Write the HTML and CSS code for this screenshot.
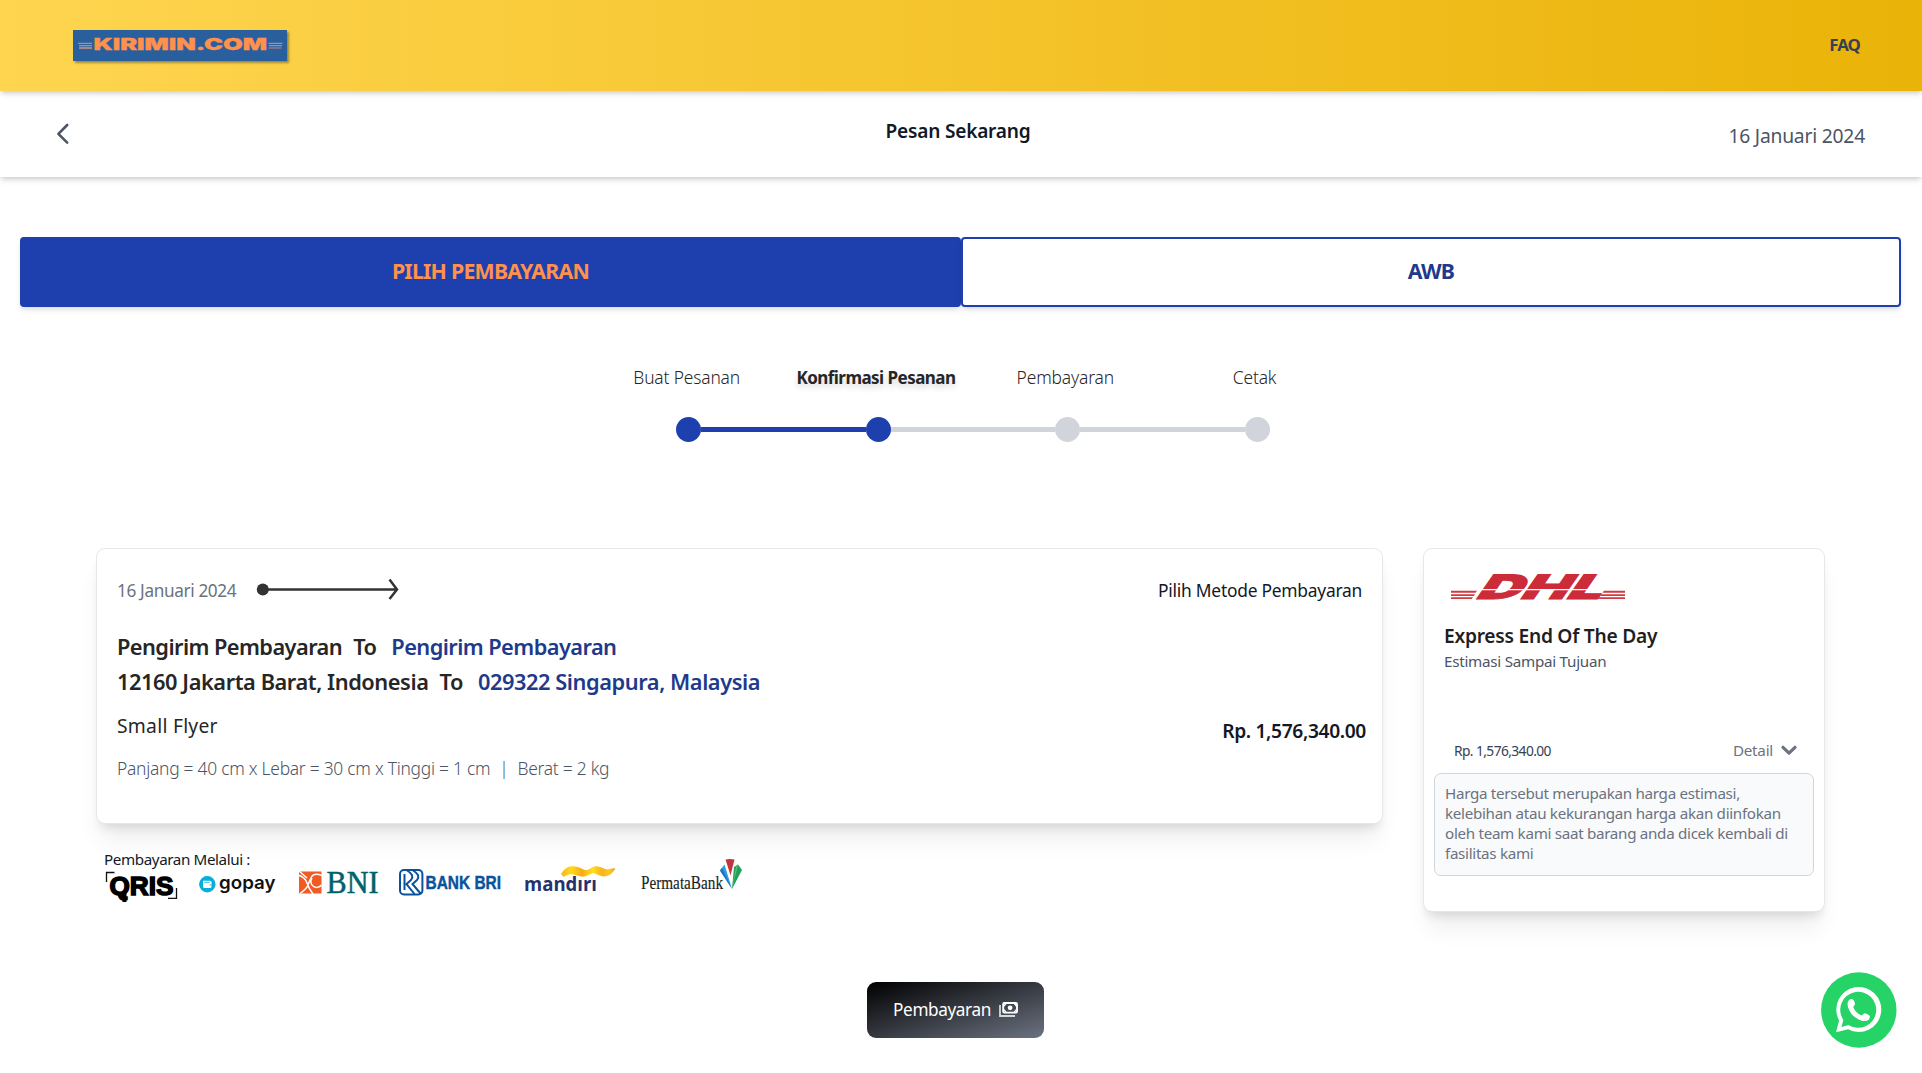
FILE: index.html
```html
<!DOCTYPE html>
<html lang="id">
<head>
<meta charset="utf-8">
<title>Kirimin.com - Konfirmasi Pesanan</title>
<link rel="stylesheet" href="styles.css">
</head>
<body>
<header class="topbar">
  <svg class="brand" viewBox="0 0 214 31" width="214" height="31" role="img" aria-label="Kirimin.com">
    <rect width="214" height="31" fill="#2a5f9e"/>
    <path d="M5 13.300h14M6 15.700h13M195.500 13.300h14M196 15.700h13M195.500 18h13" stroke="#b98a80" stroke-width="1.200"/>
    <path d="M6 18h13" stroke="#a98485" stroke-width="2.200"/>
    <text x="20.500" y="20.200" class="brand-text" textLength="173.500" lengthAdjust="spacingAndGlyphs">KIRIMIN.COM</text>
  </svg>
  <a class="faq">FAQ</a>
</header>
<nav class="subbar">
  <svg class="back" viewBox="0 0 24 24" width="24" height="24" fill="none" stroke="#4b5563" stroke-width="2.600" stroke-linecap="round" stroke-linejoin="round"><path d="M15.200 3L6.400 11.800L15.200 20.600"/></svg>
  <h1 class="page-title">Pesan Sekarang</h1>
  <span class="today">16 Januari 2024</span>
</nav>
<main class="main">
  <div class="tabs">
    <button class="tab tab-active">PILIH PEMBAYARAN</button>
    <button class="tab">AWB</button>
  </div>
  <div class="steps">
    <div class="step-labels">
      <span>Buat Pesanan</span>
      <span class="step-current">Konfirmasi Pesanan</span>
      <span>Pembayaran</span>
      <span>Cetak</span>
    </div>
    <div class="track">
      <i class="dot done"></i><i class="line done"></i><i class="dot done"></i><i class="line"></i><i class="dot"></i><i class="line"></i><i class="dot"></i>
    </div>
  </div>
  <div class="content">
    <section class="left">
      <article class="card order">
        <div class="order-head">
          <span class="order-date">16 Januari 2024</span>
          <svg class="arrow" viewBox="0 0 142 24" width="142" height="24" fill="none" stroke="#333" stroke-width="2.500"><circle cx="5.800" cy="11.500" r="6" fill="#333" stroke="none"/><path d="M8 11.500h131M132.500 1.500l7.500 10l-7.500 9.500"/></svg>
          <span class="order-method">Pilih Metode Pembayaran</span>
        </div>
        <div class="route"><span>Pengirim Pembayaran</span><span class="to">To</span><span class="dest">Pengirim Pembayaran</span></div>
        <div class="route route-city"><span>12160 Jakarta Barat, Indonesia</span><span class="to">To</span><span class="dest">029322 Singapura, Malaysia</span></div>
        <div class="order-foot">
          <div>
            <p class="package">Small Flyer</p>
            <p class="dims"><span>Panjang = 40 cm x Lebar = 30 cm x Tinggi = 1 cm</span><span class="bar">|</span><span>Berat = 2 kg</span></p>
          </div>
          <strong class="total">Rp. 1,576,340.00</strong>
        </div>
      </article>
      <p class="via">Pembayaran Melalui :</p>
      <div class="logos">
        <svg viewBox="104 858 77 46" width="77" height="46" role="img" aria-label="QRIS">
          <path d="M106.500 882V872.500h8M168 898.300h8.500V888" fill="none" stroke="#111" stroke-width="1.300"/>
          <text x="109.500" y="894.500" class="lg-qris" textLength="64" lengthAdjust="spacingAndGlyphs">QRIS</text>
          <path d="M122.500 893h4v9h-4z" fill="#000"/>
        </svg>
        <svg viewBox="197 858 81 46" width="81" height="46" role="img" aria-label="gopay">
          <circle cx="207.300" cy="884.300" r="8.200" fill="#08aed6"/>
          <path d="M203 880.800h7a1.500 1.500 0 0 1 1.500 1.500v4.200a1.500 1.500 0 0 1-1.500 1.500h-5.500a1.500 1.500 0 0 1-1.500-1.500z" fill="#fff"/>
          <path d="M204 882.300h5.500M209.500 885h2" stroke="#08aed6" stroke-width=".8"/>
          <text x="219" y="888.500" class="lg-gopay" textLength="56.500" lengthAdjust="spacingAndGlyphs">gopay</text>
        </svg>
        <svg viewBox="294 858 87 46" width="87" height="46" role="img" aria-label="BNI">
          <path d="M299 871.500h22.500v22H299z" fill="#f15a23"/>
          <path d="M298 875q7 2 9 8t6 11M322 875.500q-8-3-10.500 1.500t-3.500 8-8 8.500M312 878a5.500 5.500 0 0 0 9.500 7M299 871l8 7" fill="none" stroke="#fff" stroke-width="1.500"/>
          <text x="326.500" y="893" class="lg-bni" textLength="52" lengthAdjust="spacingAndGlyphs">BNI</text>
        </svg>
        <svg viewBox="397 858 106 46" width="106" height="46" role="img" aria-label="BANK BRI">
          <rect x="400" y="870" width="22.400" height="24.500" rx="4" fill="#fff" stroke="#0b529c" stroke-width="2"/>
          <path d="M404.500 874v16M407 870.500q8 4.500 4 9.500L406.500 884l8 10M413 870.500q8 4.500 4 9.500L412.500 884l8 9.500" fill="none" stroke="#0b529c" stroke-width="2"/>
          <text x="425.500" y="888.600" class="lg-bri" textLength="75.500" lengthAdjust="spacingAndGlyphs">BANK BRI</text>
        </svg>
        <svg viewBox="519 858 100 46" width="100" height="46" role="img" aria-label="mandiri">
          <defs><linearGradient id="gold" x1="0" x2="1"><stop offset="0" stop-color="#f9b51a"/><stop offset=".2" stop-color="#ffd91a"/><stop offset=".38" stop-color="#f8ab18"/><stop offset=".58" stop-color="#ffe11a"/><stop offset=".75" stop-color="#f9b31c"/><stop offset=".9" stop-color="#fcc81c"/><stop offset="1" stop-color="#ee9b2a"/></linearGradient></defs>
          <path d="M561 874C565 868 569 865.500 575 866.500C581 867 583 870.500 587 870C591 869 593 865.500 598 866.500C603 867.500 605 870 609 869.300Q613 867.500 615.500 868.500C613 872.500 609 877 603 876.500C597 875.500 595 872.500 592 873.500C588 875 586 877.300 581 876.500C575 875.500 572 873.500 569 874.500Q565 875.500 563.500 877z" fill="url(#gold)"/>
          <text x="524" y="891" class="lg-mandiri" textLength="73" lengthAdjust="spacingAndGlyphs">mandırı</text>
        </svg>
        <svg viewBox="635 858 110 46" width="110" height="46" role="img" aria-label="PermataBank">
          <text x="641" y="889.200" class="lg-permata" textLength="82" lengthAdjust="spacingAndGlyphs">PermataBank</text>
          <path d="M725.500 859.500q4.500-1 9 0l-4 16z" fill="#c4343d"/>
          <path d="M720 870.500l4.500-6 7.500 24.500z" fill="#2f9ee0"/><path d="M720 870.500l2-2.800 10 21.300z" fill="#1f76be"/>
          <path d="M732 889l2-22 4-2.500 4 5.500z" fill="#21a05a"/><path d="M732 889l4-22 2-2.500z" fill="#5cc27a"/>
        </svg>
      </div>
    </section>
    <aside class="card courier">
      <svg class="dhl" viewBox="1449 572 178 30" width="178" height="30" role="img" aria-label="DHL">
        <text class="lg-dhl" transform="translate(1474 598.800) skewX(-35)" x="0" y="0" textLength="125" lengthAdjust="spacingAndGlyphs">DHL</text>
        <path d="M1474 589.700h130" stroke="#fff" stroke-width="1.300"/>
        <path d="M1451 590.800h26l-1.500 2h-24.500zM1451 594.300h24l-1.200 1.600h-22.800zM1451 597.300h22l-1.200 1.600h-20.800zM1604 590.800h21v2h-22.500zM1601.500 594.300h23.500v1.600h-24.700zM1599.200 597.300h25.800v1.600h-27z" fill="#d23a40"/>
      </svg>
      <h2 class="service">Express End Of The Day</h2>
      <p class="eta">Estimasi Sampai Tujuan</p>
      <div class="price-row">
        <span class="price">Rp. 1,576,340.00</span>
        <span class="detail">Detail<svg viewBox="0 0 16 12" width="16" height="12" fill="none" stroke="#6b7280" stroke-width="3.200" stroke-linecap="round" stroke-linejoin="round"><path d="M2 3.300l6 5.800 6-5.800"/></svg></span>
      </div>
      <p class="note">Harga tersebut merupakan harga estimasi,<br>kelebihan atau kekurangan harga akan diinfokan<br>oleh team kami saat barang anda dicek kembali di<br>fasilitas kami</p>
    </aside>
  </div>
  <button class="pay"><span>Pembayaran</span><svg viewBox="0 0 19 15" width="19" height="15" fill="none" stroke="#fff"><path d="M1 3v11h15" stroke-width="1.800" stroke="#d5d7db"/><rect x="4.200" y="1" width="13.800" height="9.600" rx="1" stroke-width="1.900"/><circle cx="11.100" cy="5.800" r="2.400" fill="#fff" stroke="none"/><path d="M5 4l2-2.500M17.300 4l-2-2.500M5 7.700l2 2.500M17.300 7.700l-2 2.500" stroke-width="1.300"/></svg></button>
</main>
<a class="whatsapp" aria-label="WhatsApp">
  <svg viewBox="0 0 76 76" width="76" height="76">
    <circle cx="37.800" cy="38" r="37.700" fill="#25d366"/>
    <path fill-rule="evenodd" fill="#fff" d="M15 60.300l3.100-11.900A22.500 22.500 0 1 1 27.100 57.300zM22.400 48l-2 7 7.200-2A18 18 0 1 0 22.400 48z"/>
    <path fill="#fff" d="M28.300 27.700c1.500-1.300 3.800-1 4.600.8l1 2.700c.5 1.500-.9 2.700-1.700 3.800 1.400 4 4.800 7.100 8.600 8.600 1.300-1 2-2.700 3.800-2.200l3.200 1.500c1.600.9 1.300 3.300.1 4.500-2.300 2.300-5.600 2-8.600.8-6-2.400-10.500-7.200-12.200-12.800-.8-2.800-.8-5.900 1.200-7.700z"/>
  </svg>
</a>
</body>
</html>
```
FILE: styles.css
```css
* { box-sizing: border-box; margin: 0; padding: 0; }
body { width: 1922px; height: 1073px; overflow: hidden; position: relative; background: #fff; color: #111827; font-family: "Noto Sans", "Open Sans", sans-serif; }
button { font-family: inherit; border: 0; cursor: pointer; }
svg { display: block; flex: none; overflow: visible; }
span, a { white-space: nowrap; }

.topbar { height: 91px; padding: 0 62px 0 73px; display: flex; align-items: center; justify-content: space-between; position: relative; z-index: 2; background: linear-gradient(to right, #ffd550, #eab308); box-shadow: 0 4px 6px -1px rgba(0,0,0,.13), 0 2px 4px -1px rgba(0,0,0,.1); }
.brand { box-shadow: 2px 2px 2px rgba(70,70,30,.5); }
.brand-text { font: 900 16px "Inter", sans-serif; fill: #ff914d; stroke: #ff914d; stroke-width: .3px; }
.faq { font-size: 16.800px; font-weight: 700; line-height: 24px; letter-spacing: -.9px; color: #374151; padding-bottom: 1px; }

.subbar { height: 86px; padding: 0 57px 0 52px; display: grid; grid-template-columns: 1fr auto 1fr; align-items: center; box-shadow: 0 4px 6px -1px rgba(0,0,0,.13), 0 2px 4px -1px rgba(0,0,0,.1); }
.page-title { font-size: 19.100px; font-weight: 600; line-height: 28px; letter-spacing: -.22px; padding: 0 1px 7px 0; }
.today { justify-self: end; font-size: 19.300px; line-height: 28px; letter-spacing: -.22px; color: #4b5563; padding-top: 3px; }

.main { padding: 60px 20px 0; }
.tabs { display: grid; grid-template-columns: 941px 940px; height: 70px; }
.tab { border: 2px solid #1e40af; border-radius: 4px; background: #fff; color: #1e3a8a; font-size: 21.300px; font-weight: 700; letter-spacing: -.75px; box-shadow: 0 4px 6px -1px rgba(0,0,0,.1), 0 2px 4px -2px rgba(0,0,0,.1); padding-bottom: 4px; }
.tab-active { background: #1e40af; color: #ff914d; }

.steps { padding: 56px 0 0 572px; }
.step-labels { display: grid; grid-template-columns: repeat(4, 189.300px); justify-items: center; font-size: 17.400px; font-weight: 300; line-height: 28px; letter-spacing: -.15px; color: #262626; }
.step-current { font-size: 17px; font-weight: 700; line-height: 29px; letter-spacing: -.54px; text-shadow: 0 4px 6px rgba(0,0,0,.15); margin-bottom: -1px; }
.track { display: flex; align-items: center; width: 594px; height: 25px; margin: 26px 0 0 84px; }
.dot { width: 25px; height: 25px; border-radius: 50%; background: #d1d5db; flex: none; }
.line { flex: 1; height: 5px; background: #d1d5db; }
.dot.done, .line.done { background: #1e40af; }

.content { display: flex; gap: 40px; align-items: flex-start; padding: 106px 0 0 76px; }
.card { border: 1px solid #e5e7eb; border-radius: 9px; background: #fff; box-shadow: 0 20px 25px -5px rgba(0,0,0,.07), 0 8px 10px -4px rgba(0,0,0,.1); }
.left { width: 1287px; flex: none; }
.order { height: 276px; padding: 28px 20px 0 20px; color: #262626; }
.order-head { display: flex; align-items: center; height: 26px; }
.order-date { width: 120px; font-size: 17.200px; line-height: 26px; letter-spacing: -.36px; color: #6b7280; padding-top: 1px; }
.arrow { margin: -1px 0 0 20px; }
.order-method { margin-left: auto; font-size: 17.400px; letter-spacing: -.25px; color: #111827; }
.route { display: flex; font-size: 21.800px; font-weight: 600; line-height: 35px; letter-spacing: -.57px; margin-top: 26px; }
.route-city { margin-top: 0; letter-spacing: -.44px; }
.to { margin: 0 15px 0 11px; }
.dest { color: #1e3a8a; }
.order-foot { display: flex; justify-content: space-between; }
.package { font-size: 19.300px; line-height: 28px; letter-spacing: .25px; margin-top: 13px; }
.dims { display: flex; font-size: 17.400px; font-weight: 300; line-height: 26px; letter-spacing: -.25px; margin-top: 15px; color: #4b5563; }
.bar { margin: 0 9px; }
.total { font-size: 19.200px; font-weight: 600; line-height: 28px; letter-spacing: -.35px; color: #111827; margin: 17.500px -4px 0 0; }
.via { margin: 26px 0 0 8px; font-size: 15.200px; line-height: 18px; letter-spacing: -.4px; }
.logos { display: flex; gap: 16px; margin: -10px 0 0 8px; }

.lg-qris { font: 700 26px "Liberation Sans", sans-serif; stroke: #000; stroke-width: 1.500px; }
.lg-gopay { font: 600 18px "Inter", sans-serif; fill: #111; }
.lg-bni { font: 400 31px "Liberation Serif", serif; fill: #00616a; stroke: #00616a; stroke-width: .5px; }
.lg-bri { font: 700 17.500px "Liberation Sans", sans-serif; fill: #0b529c; stroke: #0b529c; stroke-width: .4px; }
.lg-mandiri { font: 700 20px "Open Sans", sans-serif; fill: #22326e; }
.lg-permata { font: 400 18px "Liberation Serif", serif; fill: #1d1d1d; stroke: #1d1d1d; stroke-width: .15px; }
.lg-dhl { font: 900 33.500px "Inter", sans-serif; fill: #cc2c39; stroke: #cc2c39; stroke-width: 1px; }

.courier { width: 402px; height: 364px; padding: 23px 10px 0; }
.dhl { margin-left: 15px; }
.service { margin: 20px 0 0 10px; font-size: 19.200px; font-weight: 600; line-height: 28px; letter-spacing: -.26px; color: #1f1f1f; }
.eta { margin: 1px 0 0 10px; font-size: 15.200px; line-height: 20px; letter-spacing: -.26px; color: #4b5563; }
.price-row { display: flex; justify-content: space-between; align-items: center; height: 24px; margin: 67px 17px 0 20px; }
.price { font-size: 13.800px; letter-spacing: -.6px; color: #374151; }
.detail { display: flex; align-items: center; gap: 8px; font-size: 15.200px; letter-spacing: -.24px; color: #6b7280; }
.note { margin-top: 11px; height: 103px; border: 1px solid #d1d5db; border-radius: 7px; background: #f9fafb; padding: 9px 0 0 10px; font-size: 15.200px; line-height: 20px; letter-spacing: -.31px; color: #6b7280; white-space: nowrap; }

.pay { display: flex; align-items: center; justify-content: center; gap: 8px; width: 177px; height: 56px; margin: 70px 0 0 847px; border-radius: 9px; background: linear-gradient(to bottom right, #000, #6b7280); color: #fff; font-size: 17.200px; letter-spacing: -.4px; padding-bottom: 1px; }
.whatsapp { position: absolute; left: 1821px; top: 972px; }
```
